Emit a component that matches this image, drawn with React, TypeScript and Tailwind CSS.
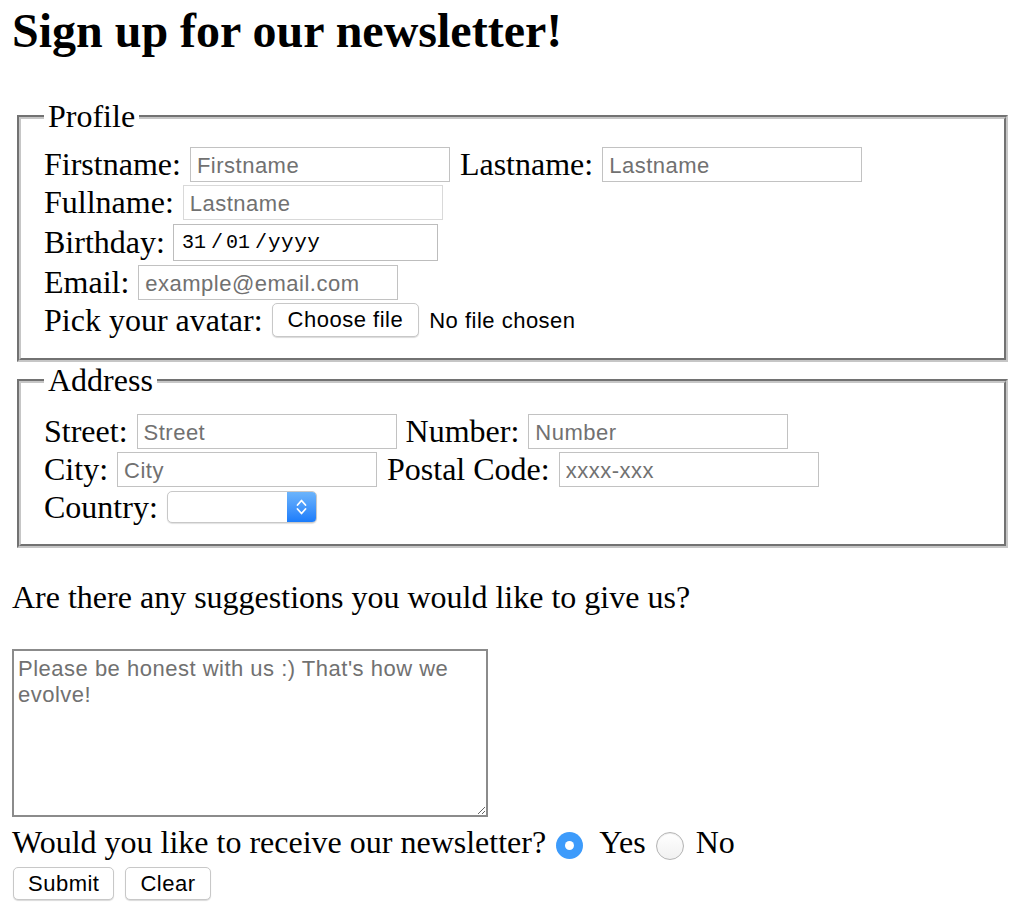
import clsx from "clsx";

const sans = "font-['Liberation_Sans',Arial,sans-serif] text-[22px] tracking-[0.5px]";

function TextField({ placeholder, className }: { placeholder: string; className?: string }) {
  return (
    <input
      type="text"
      placeholder={placeholder}
      className={clsx(
        sans,
        "ml-[9px] h-[35px] w-[260px] border bg-white px-[6px] pt-[2px] text-black outline-none placeholder:text-[#717171]",
        className ?? "border-[#c2c2c2]"
      )}
    />
  );
}

function Row({ children, className }: { children: React.ReactNode; className?: string }) {
  return <div className={clsx("flex items-center", className ?? "h-[38px]")}>{children}</div>;
}

function DateField() {
  return (
    <div className="ml-[8px] flex h-[37px] w-[265px] items-center border border-[#bdbdbd] pl-[8px] font-['Liberation_Mono',monospace] text-[20px] text-black">
      <span>31</span>
      <span className="ml-[5px]">/</span>
      <span className="ml-[3px]">01</span>
      <span className="ml-[5px]">/</span>
      <span className="ml-[1px] text-[21px] tracking-[0.5px]">yyyy</span>
    </div>
  );
}

function SelectBox() {
  return (
    <div className="ml-[9px] flex h-[32px] w-[150px] justify-end overflow-hidden rounded-[5px] border border-[#c8c8c8] bg-white shadow-[0_1px_1px_rgba(0,0,0,0.12)]">
      <div className="flex w-[29px] items-center justify-center bg-gradient-to-b from-[#6cb4fb] to-[#1a7cfb]">
        <svg width="11" height="18" viewBox="0 0 11 18" fill="none" stroke="white" strokeWidth="1.8" strokeLinecap="round" strokeLinejoin="round">
          <path d="M1.5 7 L5.5 2.5 L9.5 7" />
          <path d="M1.5 11 L5.5 15.5 L9.5 11" />
        </svg>
      </div>
    </div>
  );
}

function Radio({ checked, className }: { checked?: boolean; className?: string }) {
  return checked ? (
    <span className={clsx("flex h-[27px] w-[27px] translate-y-[3px] items-center justify-center rounded-full bg-[#3d9bfb]", className)}>
      <span className="h-[9px] w-[9px] rounded-full bg-white" />
    </span>
  ) : (
    <span
      className={clsx(
        "h-[28px] w-[28px] translate-y-[3px] rounded-full border border-[#b4b4b4] bg-gradient-to-b from-white to-[#f1f1f1] shadow-[inset_0_1px_1px_rgba(0,0,0,0.08)]",
        className
      )}
    />
  );
}

export default function App() {
  return (
    <div className="min-h-screen bg-white px-3 font-['Liberation_Serif','Times_New_Roman',serif] text-[32px] leading-[37px] text-black">
      <h1 className="mt-[3px] text-[48px] font-bold leading-[55px]">Sign up for our newsletter!</h1>

      <form>
        <fieldset className="ml-[5px] mt-[40px] w-[991px] border-4 border-[#c6c6c6] pb-[19px] pl-[23px] pt-2.5 [border-style:groove]">
          <legend className="px-1 leading-[37px]">Profile</legend>
          <Row>
            <span>Firstname:</span>
            <TextField placeholder="Firstname" />
            <span className="ml-[10px]">Lastname:</span>
            <TextField placeholder="Lastname" />
          </Row>
          <Row>
            <span>Fullname:</span>
            <TextField placeholder="Lastname" className="border-[#d9d9d9]" />
          </Row>
          <Row className="h-[42px]">
            <span>Birthday:</span>
            <DateField />
          </Row>
          <Row>
            <span>Email:</span>
            <TextField placeholder="example@email.com" />
          </Row>
          <Row>
            <span>Pick your avatar:</span>
            <button
              type="button"
              className={clsx(
                sans,
                "ml-[9px] h-[34px] rounded-[5px] border border-[#c8c8c8] bg-white px-[15px] leading-none text-black shadow-[0_1px_1px_rgba(0,0,0,0.15)]"
              )}
            >
              Choose file
            </button>
            <span className={clsx(sans, "ml-[10px] text-black")}>No file chosen</span>
          </Row>
        </fieldset>

        <fieldset className="ml-[5px] w-[991px] border-4 border-[#c6c6c6] pb-[18px] pl-[23px] pt-[13px] [border-style:groove]">
          <legend className="px-1 leading-[37px]">Address</legend>
          <Row>
            <span>Street:</span>
            <TextField placeholder="Street" />
            <span className="ml-[9px]">Number:</span>
            <TextField placeholder="Number" />
          </Row>
          <Row>
            <span>City:</span>
            <TextField placeholder="City" />
            <span className="ml-[10px]">Postal Code:</span>
            <TextField placeholder="xxxx-xxx" />
          </Row>
          <Row>
            <span>Country:</span>
            <SelectBox />
          </Row>
        </fieldset>

        <p className="mt-[31px]">Are there any suggestions you would like to give us?</p>

        <textarea
          placeholder="Please be honest with us :) That's how we evolve!"
          className={clsx(
            sans,
            "mt-[33px] block h-[168px] w-[476px] border-2 border-[#8b8b8b] px-[4px] pt-[5px] leading-[26px] text-black outline-none placeholder:text-[#717171]"
          )}
        />

        <div className="mt-[7px] flex h-[37px] items-center">
          <span>Would you like to receive our newsletter?</span>
          <Radio checked className="ml-[10px]" />
          <span className="ml-[16px]">Yes</span>
          <Radio className="ml-[10px]" />
          <span className="ml-[12px]">No</span>
        </div>

        <div className="mt-[6px] flex gap-[11px] pl-px">
          {["Submit", "Clear"].map((label) => (
            <button
              key={label}
              type="button"
              className={clsx(
                sans,
                "h-[33px] rounded-[5px] border border-[#c8c8c8] bg-white px-[14px] leading-none text-black shadow-[0_1px_1px_rgba(0,0,0,0.15)]"
              )}
            >
              {label}
            </button>
          ))}
        </div>
      </form>
    </div>
  );
}
